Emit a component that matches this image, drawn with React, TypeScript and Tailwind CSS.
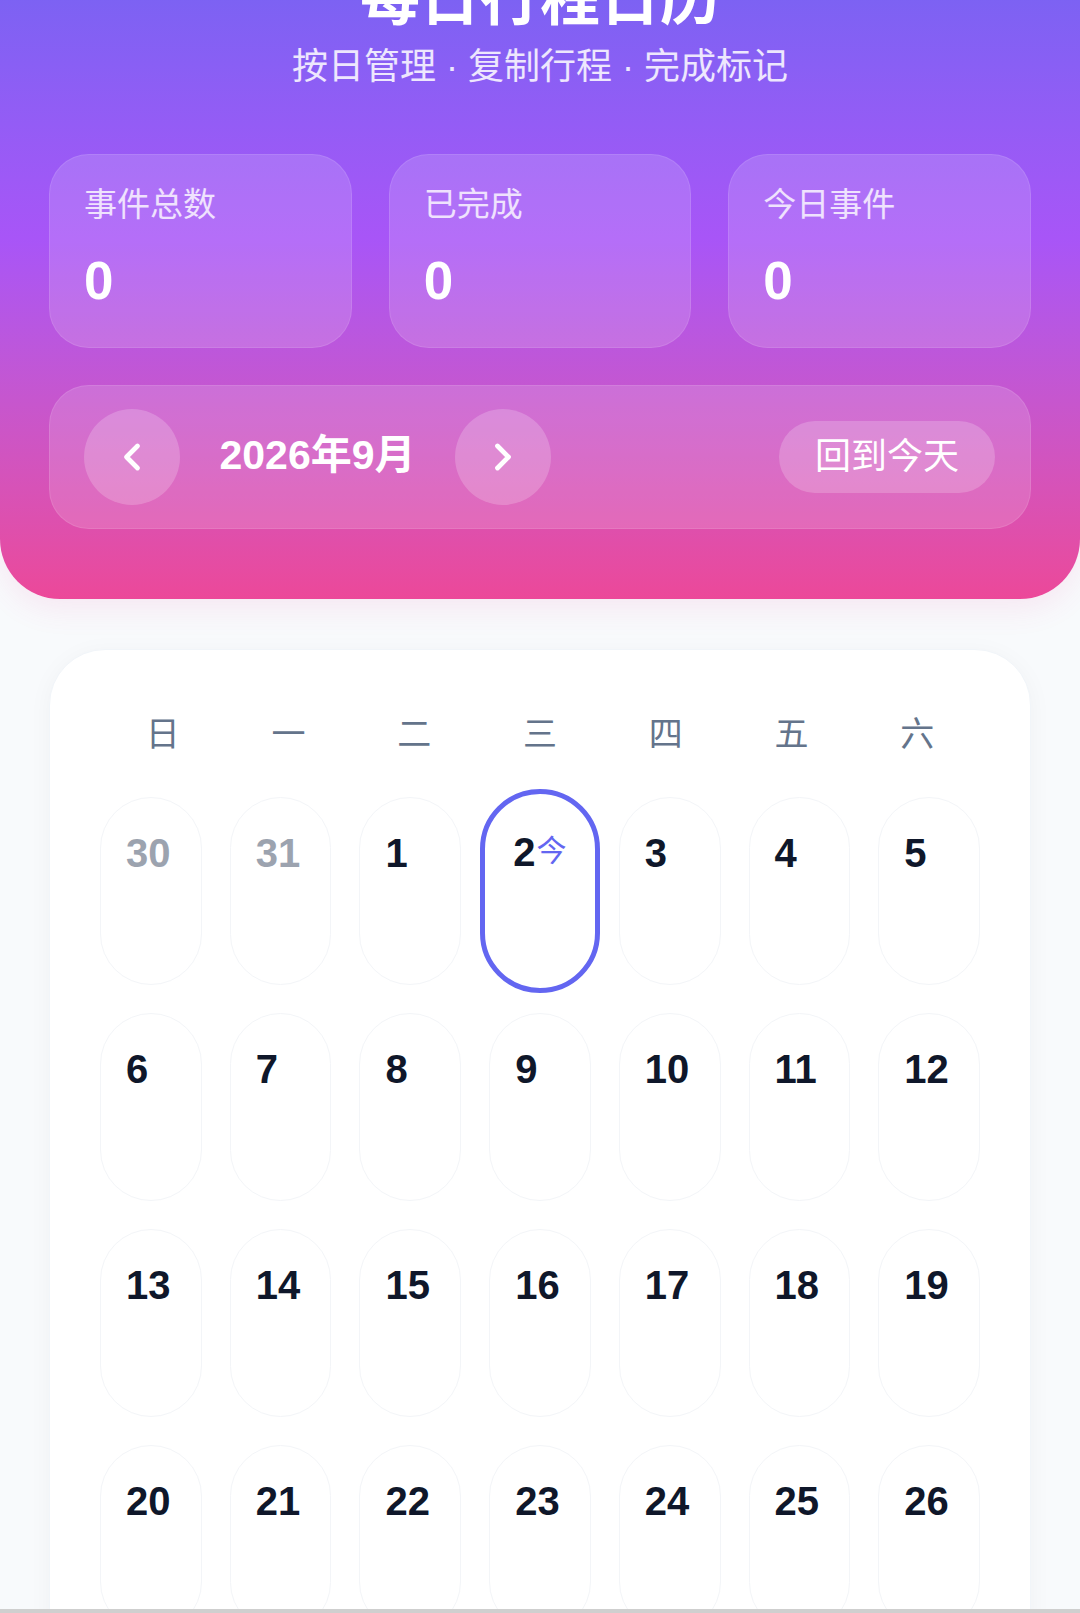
import { ChevronLeft, ChevronRight } from "lucide-react";

type Day = { n: number; muted?: boolean; today?: boolean };

const WEEKDAYS = ["日", "一", "二", "三", "四", "五", "六"];

const STATS = [
  { label: "事件总数", value: 0 },
  { label: "已完成", value: 0 },
  { label: "今日事件", value: 0 },
];

// September 2026, weeks start on Sunday
function buildDays(): Day[] {
  const days: Day[] = [{ n: 30, muted: true }, { n: 31, muted: true }];
  for (let i = 1; i <= 30; i++) days.push({ n: i, today: i === 2 });
  for (let i = 1; days.length < 35; i++) days.push({ n: i, muted: true });
  return days;
}

function DayCell({ day }: { day: Day }) {
  if (day.today) {
    return (
      <div className="-mx-[9px] -my-[8px] h-[204px] rounded-full border-[5px] border-[#6366f1] bg-white pl-[28px] pt-[38px]">
        <div className="flex items-start">
          <span className="text-[40px] font-bold leading-none text-[#0f172a]">{day.n}</span>
          <span className="ml-[1px] mt-[4px] text-[30px] leading-[30px] text-[#6366f1]">今</span>
        </div>
      </div>
    );
  }
  return (
    <div className="h-[188px] rounded-full border border-[#f3f5f8] bg-white pl-[25px] pt-[35px]">
      <span
        className={
          day.muted
            ? "text-[40px] font-bold leading-none text-[#9ca3af]"
            : "text-[40px] font-bold leading-none text-[#0f172a]"
        }
      >
        {day.n}
      </span>
    </div>
  );
}

export default function App() {
  const days = buildDays();

  return (
    <div className="flex h-[1613px] flex-col bg-[#f8fafc] font-['Liberation_Sans','Noto_Sans_CJK_SC',sans-serif]">
      <div className="flex-1 overflow-hidden">
        <div className="-mt-[120px]">
          {/* header */}
          <header className="rounded-b-[60px] bg-gradient-to-b from-[#6366f1] via-[#a855f7] to-[#ec4899] px-[49px] pb-[70px] pt-[84px] text-white shadow-[0_10px_30px_rgba(236,72,153,0.1)]">
            <h1 className="text-center text-[60px] font-bold leading-[72px]">每日行程日历</h1>
            <p className="mt-[4px] text-center text-[36px] leading-[54px] text-white/85">
              按日管理 · 复制行程 · 完成标记
            </p>

            <div className="mt-[60px] grid grid-cols-3 gap-[37px]">
              {STATS.map((s) => (
                <div
                  key={s.label}
                  className="rounded-[40px] border border-white/10 bg-white/15 px-[34px] pb-[40px] pt-[30px]"
                >
                  <p className="text-[33px] leading-[40px] text-white/80">{s.label}</p>
                  <p className="mt-[30px] text-[53px] font-bold leading-[52px]">{s.value}</p>
                </div>
              ))}
            </div>

            <div className="mt-[37px] flex h-[144px] items-center rounded-[40px] border border-white/10 bg-white/15 pl-[34px] pr-[35px]">
              <button className="flex h-[96px] w-[96px] items-center justify-center rounded-full bg-white/20">
                <ChevronLeft size={44} strokeWidth={2.6} />
              </button>
              <div className="mb-[3px] w-[275px] text-center text-[41px] font-bold leading-none">2026年9月</div>
              <button className="flex h-[96px] w-[96px] items-center justify-center rounded-full bg-white/20">
                <ChevronRight size={44} strokeWidth={2.6} />
              </button>
              <button className="ml-auto flex h-[72px] items-center rounded-full bg-white/20 px-[36px] text-[36px] leading-none">
                回到今天
              </button>
            </div>
          </header>

          {/* calendar */}
          <div className="px-[49px] pt-[50px]">
            <div className="rounded-[56px] border border-[#f1f5f9] bg-white px-[50px] pb-[50px] pt-[60px] shadow-[0_4px_24px_rgba(15,23,42,0.04)]">
              <div className="mb-[39px] grid grid-cols-7 text-center text-[34px] leading-[48px] text-[#64748b]">
                {WEEKDAYS.map((w) => (
                  <div key={w}>{w}</div>
                ))}
              </div>
              <div className="grid grid-cols-7 gap-[28px]">
                {days.map((d, i) => (
                  <DayCell key={i} day={d} />
                ))}
              </div>
            </div>
          </div>
        </div>
      </div>
      <div className="h-[4px] bg-[#cfcfcf]" />
    </div>
  );
}
